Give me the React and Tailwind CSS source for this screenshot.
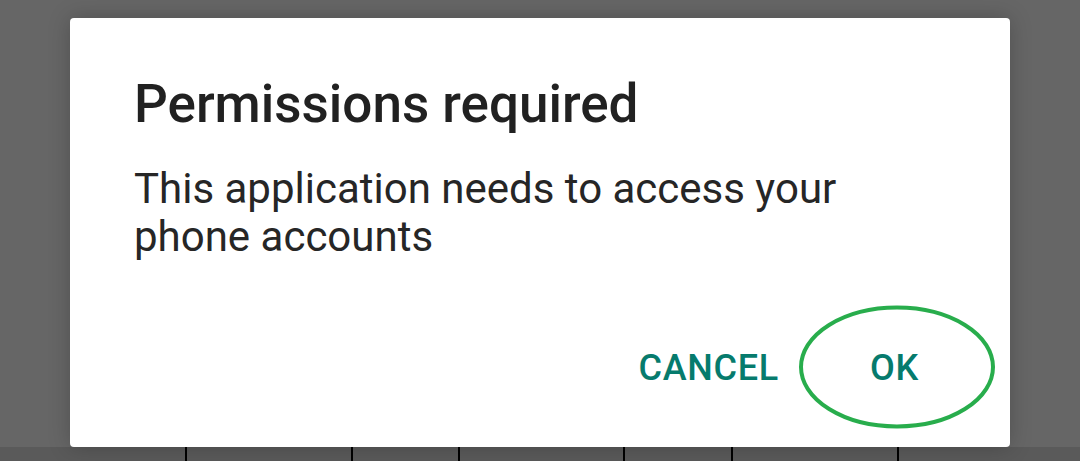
export default function App() {
  return (
    <div className="w-[1080px] h-[461px] bg-[#666666] flex flex-col overflow-hidden font-['Roboto',sans-serif]">
      <div className="h-[18px] shrink-0" />
      <div className="relative z-10 mx-[70px] h-[429px] shrink-0 bg-white rounded-[4px] shadow-[0_0_22px_rgba(0,0,0,0.22)] flex flex-col">
        <h2 className="pl-[64px] pt-[58px] text-[53px] leading-[56px] font-medium text-[#212121]">
          Permissions required
        </h2>
        <p className="pl-[64px] pr-[64px] mt-[33px] text-[42px] leading-[48px] text-[#262626]">
          This application needs to access your
          <br />
          phone accounts
        </p>
        <div className="mt-auto pb-[59px] pr-[67px] flex justify-end gap-[43px]">
          <button className="px-[24px] text-[36px] leading-[40px] font-medium tracking-[0.02em] text-[#067b6d]">
            CANCEL
          </button>
          <button className="px-[24px] text-[36px] leading-[40px] font-medium tracking-[0.02em] text-[#067b6d]">
            OK
          </button>
        </div>
        <svg
          className="absolute left-[728px] top-[287px] pointer-events-none"
          width="198"
          height="124"
          viewBox="0 0 198 124"
        >
          <ellipse cx="99" cy="62" rx="96" ry="59.5" fill="none" stroke="#28ad4c" strokeWidth="4" />
        </svg>
      </div>
      <div className="flex-1 bg-[#5a5a5a] flex">
        <div className="w-[185px] shrink-0" />
        <div className="w-[166px] shrink-0 border-l-2 border-black" />
        <div className="w-[107px] shrink-0 border-l-2 border-black" />
        <div className="w-[165px] shrink-0 border-l-2 border-black" />
        <div className="w-[108px] shrink-0 border-l-2 border-black" />
        <div className="w-[166px] shrink-0 border-l-2 border-black" />
        <div className="flex-1 border-l-2 border-black" />
      </div>
    </div>
  );
}
